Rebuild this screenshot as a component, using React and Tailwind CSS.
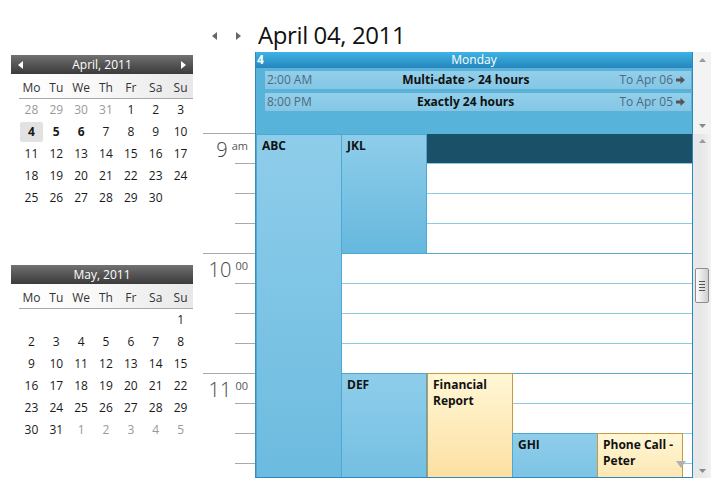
import React from 'react';

const muted = (d) => ({ d, muted: true });
const plain = (d) => ({ d });

const aprilRows = [
  [muted(28), muted(29), muted(30), muted(31), plain(1), plain(2), plain(3)],
  [{ d: 4, bold: true, sel: true }, { d: 5, bold: true }, { d: 6, bold: true }, plain(7), plain(8), plain(9), plain(10)],
  [11, 12, 13, 14, 15, 16, 17].map(plain),
  [18, 19, 20, 21, 22, 23, 24].map(plain),
  [25, 26, 27, 28, 29, 30].map(plain).concat([null]),
];

const mayRows = [
  [null, null, null, null, null, null, plain(1)],
  [2, 3, 4, 5, 6, 7, 8].map(plain),
  [9, 10, 11, 12, 13, 14, 15].map(plain),
  [16, 17, 18, 19, 20, 21, 22].map(plain),
  [23, 24, 25, 26, 27, 28, 29].map(plain),
  [plain(30), plain(31), muted(1), muted(2), muted(3), muted(4), muted(5)],
];

const dayNames = ['Mo', 'Tu', 'We', 'Th', 'Fr', 'Sa', 'Su'];

const TriLeft = ({ className }) => (
  <svg width="5" height="8" viewBox="0 0 5 8" className={className}>
    <polygon points="5,0 5,8 0,4" fill="currentColor" />
  </svg>
);

const TriRight = ({ className }) => (
  <svg width="5" height="8" viewBox="0 0 5 8" className={className}>
    <polygon points="0,0 0,8 5,4" fill="currentColor" />
  </svg>
);

const TriUp = () => (
  <svg width="7" height="4" viewBox="0 0 7 4">
    <polygon points="0,4 7,4 3.5,0" fill="#9a9a9a" />
  </svg>
);

const TriDown = () => (
  <svg width="7" height="4" viewBox="0 0 7 4">
    <polygon points="0,0 7,0 3.5,4" fill="#8a8a8a" />
  </svg>
);

const MonthCalendar = ({ title, rows, arrows }) => (
  <div className="h-[210px] shrink-0">
    <div className="h-[19px] w-[182px] bg-gradient-to-b from-[#727272] via-[#555] to-[#3b3b3b] text-white text-[12px] flex items-center justify-between px-[7px]">
      {arrows ? <TriLeft className="text-white" /> : <span />}
      <span>{title}</span>
      {arrows ? <TriRight className="text-white" /> : <span />}
    </div>
    <div className="ml-[8px] w-[174px]">
      <div className="h-[25px] grid grid-cols-7 items-end pb-[2px] border-b border-[#a8a8a8] bg-gradient-to-r from-white via-[#f7f7f7] to-[#e8e8e8] text-[12px] text-[#333]">
        {dayNames.map((n) => (
          <span key={n} className="text-center leading-[16px]">{n}</span>
        ))}
      </div>
      {rows.map((row, ri) => (
        <div key={ri} className="grid grid-cols-7 h-[22px]">
          {row.map((c, ci) => (
            <div key={ci} className="flex items-center justify-center">
              {c && (
                <span
                  className={`w-[23px] h-[20px] flex items-center justify-center text-[12px] rounded-[2px] ${
                    c.sel ? 'bg-[#e2e2e2]' : ''
                  } ${c.muted ? 'text-[#9a9a9a]' : 'text-[#1a1a1a]'} ${c.bold ? 'font-bold' : ''}`}
                >
                  {c.d}
                </span>
              )}
            </div>
          ))}
        </div>
      ))}
    </div>
  </div>
);

const ArrowRightBlock = () => (
  <svg width="9" height="8" viewBox="0 0 9 8">
    <polygon points="0,2.5 4.5,2.5 4.5,0 9,4 4.5,8 4.5,5.5 0,5.5" fill="#555" />
  </svg>
);

const AllDayBar = ({ time, title, to }) => (
  <div className="h-[20px] border border-[#5db0d7] bg-gradient-to-b from-[#92cfeb] to-[#84c7e5] flex items-center px-[2px] text-[12px]">
    <span className="text-[#4d6b80]">{time}</span>
    <span className="flex-1 text-center font-bold text-[#111]">{title}</span>
    <span className="text-[#4d6b80] mr-[3px]">{to}</span>
    <ArrowRightBlock />
    <span className="w-[4px]" />
  </div>
);

const hours = [
  { n: '9', s: 'am' },
  { n: '10', s: '00' },
  { n: '11', s: '00' },
];

const Event = ({ left, top, height, title, yellow }) => (
  <div
    className={`absolute w-[86px] border px-[5px] pt-[3px] text-[12px] font-bold leading-[16px] text-[#111] ${
      yellow
        ? 'bg-gradient-to-b from-[#fff7d6] to-[#fbd383] border-[#c59a3c]'
        : 'bg-gradient-to-b from-[#8ecdea] to-[#66b8de] border-[#4ea8d3]'
    }`}
    style={{ left, top, height }}
  >
    {title}
  </div>
);

const Scrollbar = () => (
  <div className="w-[18px] bg-gradient-to-r from-[#e8e8e8] via-[#e8e8e8] to-[#f2f2f2] flex flex-col items-center">
    <div className="h-[14px] flex items-center"><TriUp /></div>
    <div className="h-[120px]" />
    <div className="w-[14px] h-[35px] rounded-[2px] border border-[#8c8c8c] bg-gradient-to-r from-[#fbfbfb] via-[#e6e6e6] to-[#cfcfcf] flex flex-col items-center justify-center gap-[2px]">
      <span className="w-[6px] h-[1px] bg-[#555]" />
      <span className="w-[6px] h-[1px] bg-[#555]" />
      <span className="w-[6px] h-[1px] bg-[#555]" />
      <span className="w-[6px] h-[1px] bg-[#555]" />
    </div>
    <div className="flex-1" />
    <div className="h-[14px] flex items-center"><TriDown /></div>
  </div>
);

export default function App() {
  return (
    <div className="w-[715px] h-[500px] bg-white flex font-['Open_Sans',sans-serif] overflow-hidden">
      {/* mini calendars */}
      <div className="w-[200px] pl-[11px] pt-[55px] flex flex-col">
        <MonthCalendar title="April, 2011" rows={aprilRows} arrows />
        <MonthCalendar title="May, 2011" rows={mayRows} />
      </div>

      {/* day view */}
      <div className="flex flex-col pt-[20px]">
        <div className="h-[32px] flex items-start">
          <div className="w-[58px] flex items-center gap-[19px] pl-[12px] pt-[12px] text-[#666]">
            <TriLeft />
            <TriRight />
          </div>
          <span className="text-[24px] tracking-[-0.4px] leading-[28px] text-[#111] mt-[1px]">April 04, 2011</span>
        </div>

        <div className="flex h-[82px]">
          <div className="w-[55px]" />
          <div className="w-[438px] border-x border-[#2a88bd] flex flex-col">
            <div className="h-[16px] bg-gradient-to-b from-[#3db3e5] to-[#2686bd] text-white text-[12px] leading-[16px] flex">
              <span className="font-bold pl-[1px] w-[40px]">4</span>
              <span className="flex-1 text-center">Monday</span>
              <span className="w-[40px]" />
            </div>
            <div className="flex-1 bg-[#58b3da] pl-[8px] pt-[2px] flex flex-col gap-[2px]">
              <AllDayBar time="2:00 AM" title="Multi-date > 24 hours" to="To Apr 06" />
              <AllDayBar time="8:00 PM" title="Exactly 24 hours" to="To Apr 05" />
            </div>
          </div>
          <div className="w-[18px] bg-[#f3f3f3] flex flex-col items-center justify-between py-[6px]">
            <TriUp />
            <TriDown />
          </div>
        </div>

        <div className="flex h-[344px]">
          <div className="w-[55px] -mt-[1px] flex flex-col overflow-hidden">
            {hours.map((h) => (
              <div key={h.n} className="h-[120px] shrink-0 ml-[3px] border-t border-[#a9a9a9] flex flex-col">
                <div className="h-[29px] flex justify-end pr-[7px] pt-[6px] text-[#444]">
                  <span className="text-[20px] leading-[20px] font-light">{h.n}</span>
                  <span className="text-[11px] leading-[11px] ml-[4px] text-[#555]">{h.s}</span>
                </div>
                <div className="h-[30px] w-[20px] self-end border-t border-[#a9a9a9]" />
                <div className="h-[30px] w-[20px] self-end border-t border-[#a9a9a9]" />
                <div className="h-[30px] w-[20px] self-end border-t border-[#a9a9a9]" />
              </div>
            ))}
          </div>

          <div className="w-[438px] border-x border-b border-[#2a88bd] border-l-[#3a8cb6] relative overflow-hidden">
            {Array.from({ length: 12 }).map((_, i) => (
              <div
                key={i}
                className={`h-[30px] border-b ${i % 4 === 3 ? 'border-[#5aaad0]' : 'border-[#8ccbe4]'}`}
              />
            ))}
            <div className="absolute left-[171px] right-0 top-0 h-[29px] bg-[#1a5068]" />
            <Event left={0} top={0} height={400} title="ABC" />
            <Event left={85} top={0} height={120} title="JKL" />
            <Event left={85} top={239} height={160} title="DEF" />
            <Event left={171} top={239} height={160} title="Financial Report" yellow />
            <Event left={256} top={299} height={100} title="GHI" />
            <Event left={341} top={299} height={100} title="Phone Call - Peter" yellow />
            <svg width="10" height="7" viewBox="0 0 10 7" className="absolute left-[420px] top-[327px]">
              <polygon points="0,0 10,0 5,7" fill="#b0b0b0" />
            </svg>
          </div>

          <Scrollbar />
        </div>
      </div>
    </div>
  );
}
